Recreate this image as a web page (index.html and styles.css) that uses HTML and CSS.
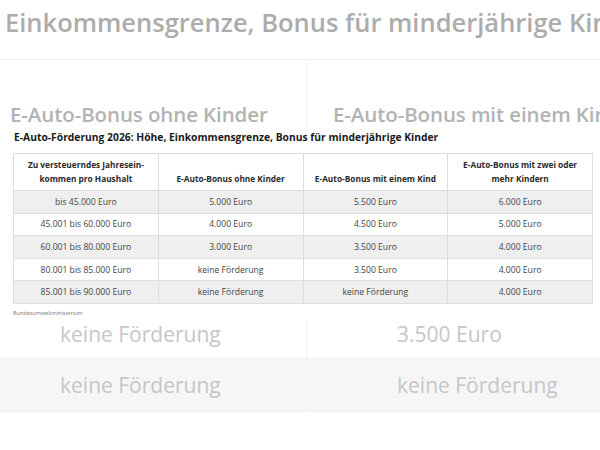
FILE: index.html
```html
<!DOCTYPE html>
<html lang="de">
<head>
<meta charset="utf-8">
<link rel="stylesheet" href="styles.css">
</head>
<body>
<div class="page">
  <div class="bg">
    <div class="bg-title">Einkommensgrenze, Bonus für minderjährige Kinder</div>
    <div class="bg-grid">
      <div class="bg-head bg-c1">E-Auto-Bonus ohne Kinder</div>
      <div class="bg-head bg-c2">E-Auto-Bonus mit einem Kind</div>
      <div class="bg-cell bg-c1">keine Förderung</div>
      <div class="bg-cell bg-c2">3.500 Euro</div>
      <div class="bg-cell bg-c1 bg-alt">keine Förderung</div>
      <div class="bg-cell bg-c2 bg-alt">keine Förderung</div>
    </div>
  </div>
  <div class="card">
    <div class="card-title">E-Auto-Förderung 2026: Höhe, Einkommensgrenze, Bonus für minderjährige Kinder</div>
    <table class="tbl">
      <thead>
        <tr>
          <th>Zu versteuerndes Jahresein-<br>kommen pro Haushalt</th>
          <th class="th-low">E-Auto-Bonus ohne Kinder</th>
          <th class="th-low">E-Auto-Bonus mit einem Kind</th>
          <th>E-Auto-Bonus mit zwei oder<br>mehr Kindern</th>
        </tr>
      </thead>
      <tbody>
        <tr class="alt"><td>bis 45.000 Euro</td><td>5.000 Euro</td><td>5.500 Euro</td><td>6.000 Euro</td></tr>
        <tr><td>45.001 bis 60.000 Euro</td><td>4.000 Euro</td><td>4.500 Euro</td><td>5.000 Euro</td></tr>
        <tr class="alt"><td>60.001 bis 80.000 Euro</td><td>3.000 Euro</td><td>3.500 Euro</td><td>4.000 Euro</td></tr>
        <tr><td>80.001 bis 85.000 Euro</td><td>keine Förderung</td><td>3.500 Euro</td><td>4.000 Euro</td></tr>
        <tr class="alt"><td>85.001 bis 90.000 Euro</td><td>keine Förderung</td><td>keine Förderung</td><td>4.000 Euro</td></tr>
      </tbody>
    </table>
    <div class="source">Bundesumweltministerium</div>
  </div>
</div>
</body>
</html>
```
FILE: styles.css
```css
html, body {
  margin: 0;
  padding: 0;
  background: #ffffff;
}
.page {
  position: relative;
  width: 600px;
  height: 450px;
  overflow: hidden;
  font-family: "Open Sans", "Noto Sans", sans-serif;
}
.bg-title {
  height: 59px;
  box-sizing: border-box;
  padding: 4px 0 0 5px;
  font-size: 25.5px;
  line-height: 36px;
  font-weight: 600;
  letter-spacing: 0;
  color: #acacac;
  white-space: nowrap;
  overflow: hidden;
}
.bg-grid {
  display: grid;
  grid-template-columns: 307px 293px;
  border-top: 1px solid #f0f0f0;
  border-bottom: 1px solid #f0f0f0;
}
.bg-c1 {
  border-right: 1px solid #f2f2f2;
}
.bg-head {
  height: 250px;
  box-sizing: border-box;
  padding-top: 39px;
  font-size: 20.5px;
  line-height: 30px;
  font-weight: 600;
  letter-spacing: -0.1px;
  color: #b3b3b3;
  white-space: nowrap;
  overflow: hidden;
}
.bg-head.bg-c1 { padding-left: 10px; }
.bg-head.bg-c2 { padding-left: 26px; }
.bg-cell {
  height: 48px;
  display: flex;
  align-items: center;
  font-size: 21px;
  color: #c6c6c6;
}
.bg-cell.bg-c1 { padding-left: 60px; }
.bg-cell.bg-c2 { padding-left: 90px; }
.bg-alt {
  background: #f6f6f6;
  height: 52px;
  border-top: 1px solid #f0f0f0;
}
.card {
  position: absolute;
  top: 127px;
  left: 0;
  width: 600px;
  height: 193px;
  background: #ffffff;
  box-sizing: border-box;
  padding: 3px 7px 0 13px;
}
.card-title {
  font-size: 10.3px;
  line-height: 14px;
  font-weight: 700;
  color: #1a1a1a;
  padding-left: 1px;
  white-space: nowrap;
}
.tbl {
  margin-top: 9px;
  width: 580px;
  border-collapse: collapse;
  table-layout: fixed;
  font-size: 8.6px;
  color: #444444;
}
.tbl th, .tbl td {
  border: 1px solid #dddddd;
  text-align: center;
  padding: 0 4px;
}
.tbl thead tr {
  height: 37px;
}
.tbl th {
  font-size: 8.3px;
  font-weight: 700;
  line-height: 14px;
  color: #2a2a2a;
  vertical-align: middle;
}
.tbl th.th-low {
  vertical-align: bottom;
  padding-bottom: 4px;
}
.tbl tbody tr {
  height: 22.6px;
}
.tbl td {
  line-height: 12px;
}
.tbl tr.alt td {
  background: #efefef;
}
.source {
  margin-top: 5px;
  font-size: 5.5px;
  line-height: 8px;
  color: #777777;
}
```
